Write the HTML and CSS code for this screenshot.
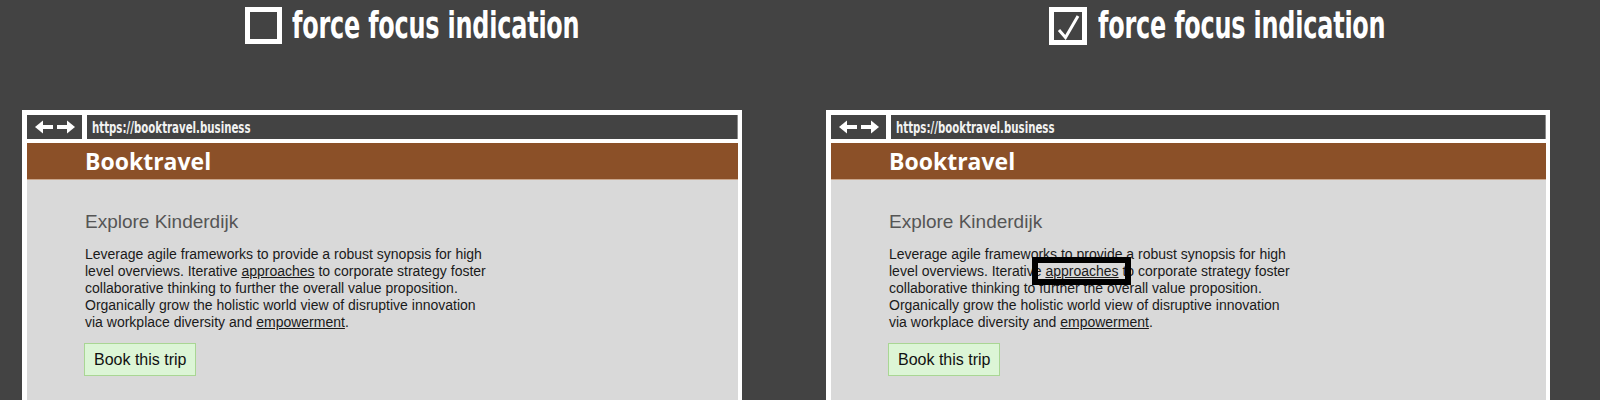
FILE: index.html
```html
<!DOCTYPE html>
<html lang="en">
<head>
<meta charset="utf-8">
<title>Focus indication comparison</title>
<link rel="stylesheet" href="styles.css">
</head>
<body>
  <section class="half half--left">
    <div class="toggle">
      <span class="checkbox"></span>
      <span class="toggle-label">force focus indication</span>
    </div>
    <div class="browser">
      <div class="toolbar">
        <div class="nav">
          <svg width="40" height="14" viewBox="0 0 40 14" aria-hidden="true">
            <polygon points="0,7 8,0.5 8,13.5" fill="#fff"/>
            <rect x="7" y="5" width="11" height="4" fill="#fff"/>
            <rect x="22" y="5" width="11" height="4" fill="#fff"/>
            <polygon points="40,7 32,0.5 32,13.5" fill="#fff"/>
          </svg>
        </div>
        <div class="url"><span class="url-text">https://booktravel.business</span></div>
      </div>
      <header class="site-header">Booktravel</header>
      <main class="content">
        <h2 class="title">Explore Kinderdijk</h2>
        <p class="copy">Leverage agile frameworks to provide a robust synopsis for high<br>level overviews. Iterative <a class="link" href="#">approaches</a> to corporate strategy foster<br>collaborative thinking to further the overall value proposition.<br>Organically grow the holistic world view of disruptive innovation<br>via workplace diversity and <a class="link" href="#">empowerment</a>.</p>
        <button class="book">Book this trip</button>
      </main>
    </div>
  </section>
  <section class="half half--right">
    <div class="toggle">
      <span class="checkbox">
        <svg width="28" height="28" viewBox="0 0 28 28" aria-hidden="true">
          <polyline points="5,18 11.5,25.5 24,4" fill="none" stroke="#fff" stroke-width="3" stroke-linejoin="miter"/>
        </svg>
      </span>
      <span class="toggle-label">force focus indication</span>
    </div>
    <div class="browser">
      <div class="toolbar">
        <div class="nav">
          <svg width="40" height="14" viewBox="0 0 40 14" aria-hidden="true">
            <polygon points="0,7 8,0.5 8,13.5" fill="#fff"/>
            <rect x="7" y="5" width="11" height="4" fill="#fff"/>
            <rect x="22" y="5" width="11" height="4" fill="#fff"/>
            <polygon points="40,7 32,0.5 32,13.5" fill="#fff"/>
          </svg>
        </div>
        <div class="url"><span class="url-text">https://booktravel.business</span></div>
      </div>
      <header class="site-header">Booktravel</header>
      <main class="content">
        <h2 class="title">Explore Kinderdijk</h2>
        <p class="copy">Leverage agile frameworks to provide a robust synopsis for high<br>level overviews. Iterative <a class="link link--focus" href="#">approaches</a> to corporate strategy foster<br>collaborative thinking to further the overall value proposition.<br>Organically grow the holistic world view of disruptive innovation<br>via workplace diversity and <a class="link" href="#">empowerment</a>.</p>
        <button class="book">Book this trip</button>
      </main>
    </div>
  </section>
</body>
</html>
```
FILE: styles.css
```css
html, body {
  margin: 0;
  padding: 0;
}
body {
  width: 1600px;
  height: 400px;
  overflow: hidden;
  background: #434343;
  display: flex;
}
.half {
  width: 800px;
  flex: none;
}
.toggle {
  height: 50px;
  display: flex;
  align-items: center;
  gap: 10px;
  padding-left: 245px;
}
.half--right .toggle {
  padding-left: 249px;
  gap: 11px;
}
.checkbox {
  width: 37px;
  height: 37px;
  box-sizing: border-box;
  border: 5px solid #fff;
  flex: none;
  display: flex;
  align-items: center;
  justify-content: center;
  margin-top: 1px;
}
.half--right .checkbox {
  width: 38px;
  height: 38px;
}
.toggle-label {
  font-family: "DejaVu Sans Condensed", "DejaVu Sans", sans-serif;
  font-weight: bold;
  font-size: 38px;
  color: #fff;
  white-space: nowrap;
  display: inline-block;
  transform: scaleX(0.7);
  transform-origin: left center;
  letter-spacing: -0.3px;
}
.browser {
  margin: 60px 0 0 22px;
  width: 720px;
  height: 360px;
  box-sizing: border-box;
  background: #fff;
  padding: 5px 4px 0 5px;
  display: flex;
  flex-direction: column;
}
.half--right .browser {
  margin: 60px 0 0 26px;
  width: 724px;
}
.toolbar {
  display: flex;
  gap: 5px;
  height: 24px;
  flex: none;
}
.nav {
  width: 55px;
  background: #434343;
  display: flex;
  align-items: center;
  justify-content: center;
}
.url {
  flex: 1;
  background: #434343;
  border-right: 1px solid #888;
  display: flex;
  align-items: center;
  padding-left: 5px;
  overflow: hidden;
}
.url-text {
  font-family: "DejaVu Sans Condensed", "DejaVu Sans", sans-serif;
  font-weight: bold;
  font-size: 16px;
  color: #f2f2f2;
  white-space: nowrap;
  display: inline-block;
  transform: scaleX(0.71);
  transform-origin: left center;
}
.site-header {
  margin-top: 4px;
  height: 37px;
  box-sizing: border-box;
  padding: 1px 0 0 58px;
  background: #8b5028;
  border-bottom: 1px solid #c9a68c;
  color: #fff;
  font-family: "Open Sans", "Noto Sans", sans-serif;
  font-weight: bold;
  font-size: 23px;
  line-height: 34px;
  flex: none;
}
.content {
  flex: 1;
  background: #d9d9d9;
  padding: 31px 0 0 58px;
}
.title {
  margin: 0;
  font-family: "Liberation Sans", Arial, sans-serif;
  font-weight: normal;
  font-size: 19px;
  line-height: 22px;
  color: #555;
}
.copy {
  margin: 13px 0 0;
  font-family: "Liberation Sans", Arial, sans-serif;
  font-size: 14px;
  line-height: 17px;
  color: #1a1a1a;
  white-space: nowrap;
}
.link {
  color: #1a1a1a;
  text-decoration: underline;
}
.link--focus {
  position: relative;
}
.link--focus::after {
  content: "";
  position: absolute;
  top: -6px;
  bottom: -6px;
  left: -13px;
  right: -12px;
  border: 6px solid #000;
}
.book {
  margin-top: 12px;
  height: 33px;
  padding: 0 9px;
  background: #dcf5d6;
  border: 1px solid #a9d694;
  border-radius: 0;
  font-family: "Liberation Sans", Arial, sans-serif;
  font-size: 16px;
  color: #111;
  margin-left: -1px;
}
```
